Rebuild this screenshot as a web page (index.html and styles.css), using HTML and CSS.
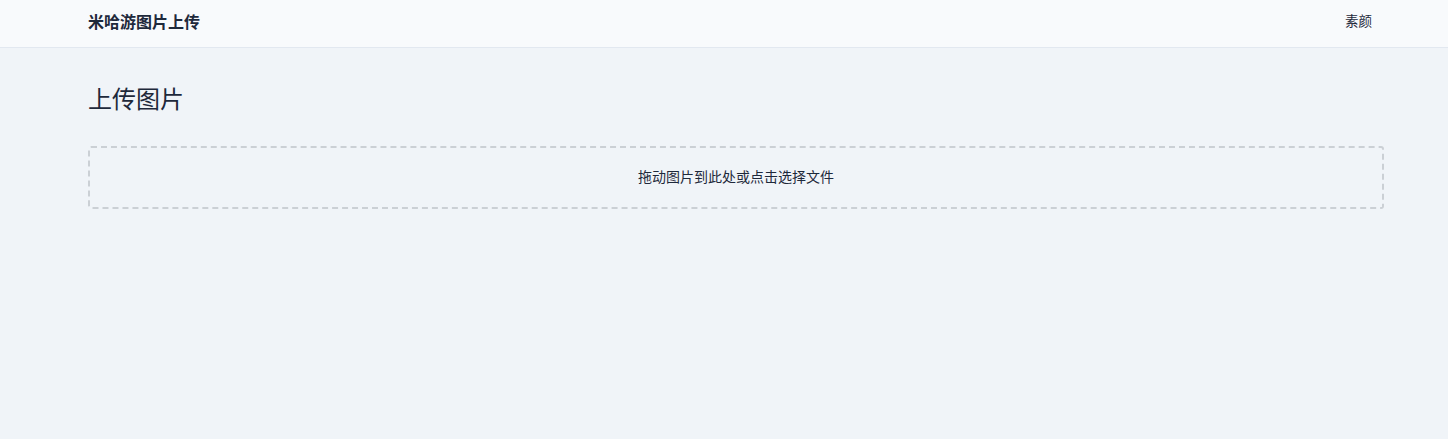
FILE: index.html
```html
<!DOCTYPE html>
<html lang="zh">
<head>
<meta charset="utf-8">
<title>米哈游图片上传</title>
<link rel="stylesheet" href="styles.css">
</head>
<body>
<header class="topbar">
  <div class="topbar-inner">
    <div class="brand">米哈游图片上传</div>
    <nav class="nav"><a class="nav-link" href="#">素颜</a></nav>
  </div>
</header>
<main class="main">
  <h1 class="title">上传图片</h1>
  <div class="dropzone">拖动图片到此处或点击选择文件</div>
</main>
</body>
</html>
```
FILE: styles.css
```css
* { box-sizing: border-box; }
html, body { margin: 0; padding: 0; }
body {
  background: #f0f4f8;
  font-family: "Noto Sans CJK SC", "Noto Sans", sans-serif;
  color: #1e293b;
  height: 439px;
}
.topbar {
  background: #f8fafc;
  border-bottom: 1px solid #e2e8f0;
  height: 48px;
}
.topbar-inner {
  height: 100%;
  display: flex;
  align-items: center;
  justify-content: space-between;
  padding: 0 76px 0 88px;
}
.brand {
  font-size: 16px;
  font-weight: 700;
  color: #1e293b;
  line-height: 1;
  margin-top: -6px;
}
.nav-link {
  font-size: 13.5px;
  color: #1e293b;
  text-decoration: none;
  line-height: 1;
  margin-top: -6px;
  display: block;
}
.main {
  padding: 0 64px 0 88px;
}
.title {
  margin: 0;
  padding-top: 36px;
  font-size: 24px;
  font-weight: 400;
  line-height: 28px;
  color: #1e293b;
}
.dropzone {
  margin-top: 34px;
  height: 63px;
  border: 2px dashed #cbd0d5;
  border-radius: 3px;
  display: flex;
  align-items: center;
  justify-content: center;
  font-size: 14px;
  color: #1e293b;
  padding-bottom: 3px;
}
```
